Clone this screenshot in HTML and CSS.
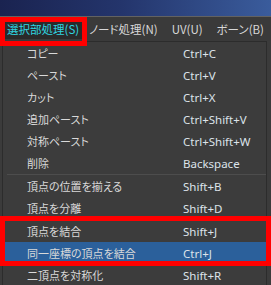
FILE: index.html
```html
<!DOCTYPE html>
<html lang="ja">
<head>
<meta charset="utf-8">
<link rel="stylesheet" href="styles.css">
</head>
<body>
<div class="screen">
  <div class="titlebar"></div>
  <div class="menubar">
    <div class="top-item active">選択部処理(S)</div>
    <div class="top-item">ノード処理(N)</div>
    <div class="top-item">UV(U)</div>
    <div class="top-item">ボーン(B)</div>
  </div>
  <div class="dropdown">
    <div class="item"><span class="label">コピー</span><span class="key">Ctrl+C</span></div>
    <div class="item"><span class="label">ペースト</span><span class="key">Ctrl+V</span></div>
    <div class="item"><span class="label">カット</span><span class="key">Ctrl+X</span></div>
    <div class="item"><span class="label">追加ペースト</span><span class="key">Ctrl+Shift+V</span></div>
    <div class="item"><span class="label">対称ペースト</span><span class="key">Ctrl+Shift+W</span></div>
    <div class="item"><span class="label">削除</span><span class="key">Backspace</span></div>
    <div class="sep"></div>
    <div class="item"><span class="label">頂点の位置を揃える</span><span class="key">Shift+B</span></div>
    <div class="item"><span class="label">頂点を分離</span><span class="key">Shift+D</span></div>
    <div class="sep"></div>
    <div class="item"><span class="label">頂点を結合</span><span class="key">Shift+J</span></div>
    <div class="item selected"><span class="label">同一座標の頂点を結合</span><span class="key">Ctrl+J</span></div>
    <div class="item"><span class="label">二頂点を対称化</span><span class="key">Shift+R</span></div>
  </div>
  <div class="mark mark-top"></div>
  <div class="mark mark-items"></div>
</div>
</body>
</html>
```
FILE: styles.css
```css
html, body {
  margin: 0;
  padding: 0;
  background: #3b3b3b;
}
.screen {
  position: relative;
  width: 271px;
  height: 285px;
  overflow: hidden;
  font-family: "Noto Sans CJK JP", "Noto Sans", sans-serif;
  font-feature-settings: "palt";
  background: #3b3b3b;
}
.titlebar {
  height: 17px;
  background: linear-gradient(90deg, #1a2350 0%, #24356c 45%, #3a5c9c 100%);
  box-shadow: inset 0 -1px 0 #626262;
}
.menubar {
  height: 24px;
  display: flex;
  align-items: center;
  background: #3a3a3a;
  color: #d8d8d8;
  font-size: 11.5px;
}
.top-item {
  padding: 0 7px;
  line-height: 19px;
  white-space: nowrap;
}
.top-item.active {
  background: #2a2a2a;
  color: #2fd6e2;
  padding: 0 0 0 7px;
  width: 76px;
}
.dropdown {
  margin-left: 2px;
  width: 263px;
  background: #3c3c3c;
  border: 1px solid #2c2c2c;
  color: #d9d9d9;
  font-size: 11px;
}
.item {
  height: 22px;
  display: grid;
  grid-template-columns: 156px 1fr;
  align-items: center;
  padding-left: 24px;
  white-space: nowrap;
}
.item.selected {
  background: #2b609b;
}
.key {
  font-family: "Noto Sans", "Liberation Sans", sans-serif;
  font-feature-settings: normal;
  font-size: 11.5px;
  color: #dde3ea;
}
.sep {
  height: 1px;
  margin: 0 0 0 4px;
  background: #4d4d4d;
}
.mark {
  position: absolute;
  border: 5px solid #ff0000;
  box-sizing: border-box;
}
.mark-top {
  left: 0;
  top: 17px;
  width: 87px;
  height: 29px;
}
.mark-items {
  left: 0;
  top: 216px;
  width: 271px;
  height: 50px;
}
```
